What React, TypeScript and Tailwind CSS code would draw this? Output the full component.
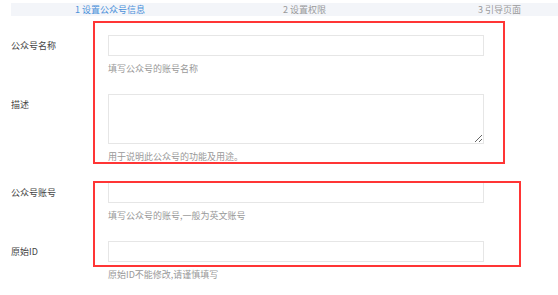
import React from "react";

const font = { fontFamily: '"Noto Sans CJK SC", "Noto Sans", sans-serif' };

function Row({ label, helper, tall }: { label: string; helper: string; tall?: boolean }) {
  return (
    <div className="flex mb-[19px]">
      <div className="w-[97px] text-[9px] leading-[21px] text-[#444]">{label}</div>
      <div className="flex flex-col">
        {tall ? (
          <textarea className="w-[376px] h-[50px] border border-[#e6e6e6] bg-white outline-none" />
        ) : (
          <input className="w-[376px] h-[21px] border border-[#e6e6e6] bg-white outline-none" />
        )}
        <div className="mt-[7px] text-[9px] leading-[12px] text-[#999]">{helper}</div>
      </div>
    </div>
  );
}

export default function App() {
  return (
    <div className="relative w-[558px] h-[295px] bg-white overflow-hidden" style={font}>
      <div className="pt-[3px] pl-[11px]">
        <div className="h-[13px] bg-[#f3f5f9] flex items-center text-[9px] leading-[13px]">
          <span className="ml-[64px] text-[#4a90d9]">1 设置公众号信息</span>
          <span className="ml-[138px] text-[#999]">2 设置权限</span>
          <span className="ml-[152px] text-[#999]">3 引导页面</span>
        </div>
      </div>
      <div className="pt-[19px] pl-[11px]">
        <Row label="公众号名称" helper="填写公众号的账号名称" />
        <Row label="描述" helper="用于说明此公众号的功能及用途。" tall />
        <Row label="公众号账号" helper="填写公众号的账号,一般为英文账号" />
        <Row label="原始ID" helper="原始ID不能修改,请谨慎填写" />
      </div>
      <div className="absolute left-[93px] top-[21px] w-[412px] h-[143px] border-2 border-[#ff3535] pointer-events-none" />
      <div className="absolute left-[93px] top-[181px] w-[428px] h-[86px] border-2 border-[#ff3535] pointer-events-none" />
    </div>
  );
}
